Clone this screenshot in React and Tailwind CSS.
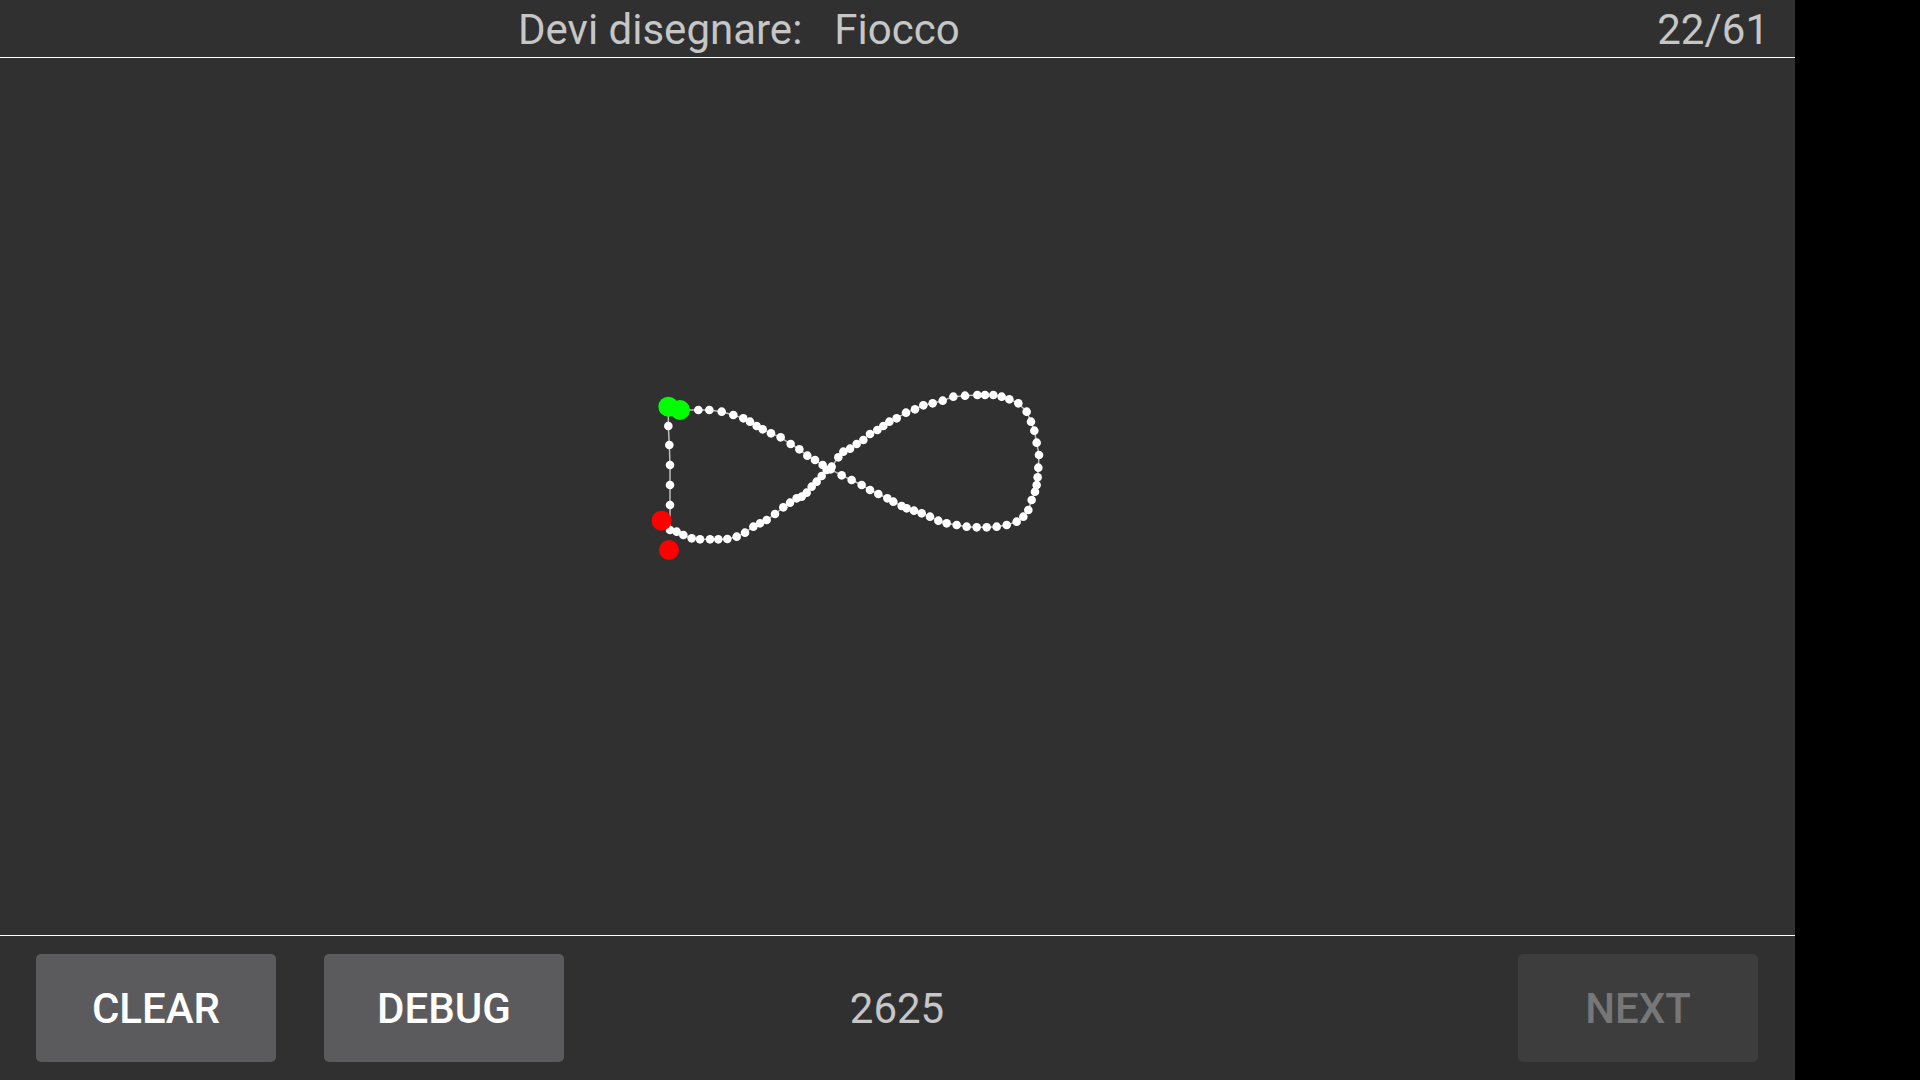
import React from 'react';

// trail points, in zoom space of the sketch (x/3 + 640, y/3 + 370)
const trail = [
  [120, 120], [175, 120], [208, 120], [245, 125], [280, 135], [310, 145], [330, 155], [350, 168],
  [368, 178], [393, 190], [422, 202], [452, 222], [478, 238], [502, 257], [525, 270], [548, 285],
  [572, 298], [605, 316], [635, 330], [665, 345], [690, 360], [715, 372], [742, 385], [760, 395],
  [785, 408], [800, 415], [822, 422], [845, 430], [870, 440], [895, 452], [920, 460], [950, 465],
  [980, 470], [1010, 472], [1040, 472], [1070, 470], [1100, 465], [1130, 455], [1150, 440],
  [1165, 420], [1175, 390], [1185, 365], [1190, 345], [1193, 322], [1195, 293], [1197, 255],
  [1190, 218], [1183, 182], [1173, 155], [1160, 125], [1135, 100], [1108, 88], [1085, 80],
  [1060, 75], [1035, 75], [1012, 75], [975, 77], [940, 80], [908, 92], [878, 100], [850, 106],
  [825, 118], [798, 128], [770, 145], [748, 155], [730, 168], [712, 180], [690, 192], [670, 210],
  [650, 222], [630, 236], [610, 245], [595, 262], [575, 290], [560, 300], [545, 318], [530, 335],
  [515, 350], [500, 368], [485, 380], [470, 385], [450, 398], [430, 412], [405, 432], [380, 450],
  [360, 460], [340, 470], [315, 488], [290, 500], [262, 507], [235, 508], [210, 508], [180, 508],
  [155, 505], [130, 495], [110, 485], [90, 480], [90, 405], [90, 345], [90, 285], [88, 225],
  [85, 168], [85, 110],
];

const toCanvas = ([x, y]) => [640 + x / 3, 370 + y / 3 - 58];

const greens = [[85, 110], [120, 120]].map(toCanvas);
const reds = [[65, 452], [87, 540]].map(toCanvas);

function Sketch() {
  const pts = trail.map(toCanvas);
  return (
    <svg className="w-full h-full" viewBox="0 0 1795 877">
      <polyline
        points={pts.map(p => p.join(',')).join(' ')}
        fill="none"
        stroke="#bdbdbd"
        strokeWidth="1.5"
      />
      {pts.map((p, i) => (
        <circle key={i} cx={p[0]} cy={p[1]} r="4.3" fill="#ffffff" />
      ))}
      {reds.map((p, i) => (
        <circle key={'r' + i} cx={p[0]} cy={p[1]} r="10" fill="#ff0000" />
      ))}
      {greens.map((p, i) => (
        <circle key={'g' + i} cx={p[0]} cy={p[1]} r="10" fill="#00ff00" />
      ))}
    </svg>
  );
}

export default function App() {
  return (
    <div className="w-[1920px] h-[1080px] bg-black flex font-['Roboto','Liberation_Sans',sans-serif]">
      <div className="w-[1795px] h-full bg-[#303030] flex flex-col">
        <div className="h-[58px] flex items-center border-b border-white text-[42px] text-[#c6c6c6] pt-[2px] pl-[518px] pr-[26px]">
          <span className="mr-[32px]">Devi disegnare:</span>
          <span>Fiocco</span>
          <span className="ml-auto">22/61</span>
        </div>

        <div className="flex-1">
          <Sketch />
        </div>

        <div className="h-[145px] border-t border-white grid grid-cols-[1fr_auto_1fr] items-center pl-[36px] pr-[37px]">
          <div className="flex gap-[48px]">
            <button className="w-[240px] h-[108px] rounded-[5px] bg-[#5b5b5d] text-white text-[42px] font-medium">
              CLEAR
            </button>
            <button className="w-[240px] h-[108px] rounded-[5px] bg-[#5b5b5d] text-white text-[42px] font-medium">
              DEBUG
            </button>
          </div>
          <span className="text-[42px] text-[#c6c6c6]">2625</span>
          <div className="flex justify-end">
            <button className="w-[240px] h-[108px] rounded-[5px] bg-[#3d3d3d] text-[#777777] text-[42px] font-medium">
              NEXT
            </button>
          </div>
        </div>
      </div>
    </div>
  );
}
